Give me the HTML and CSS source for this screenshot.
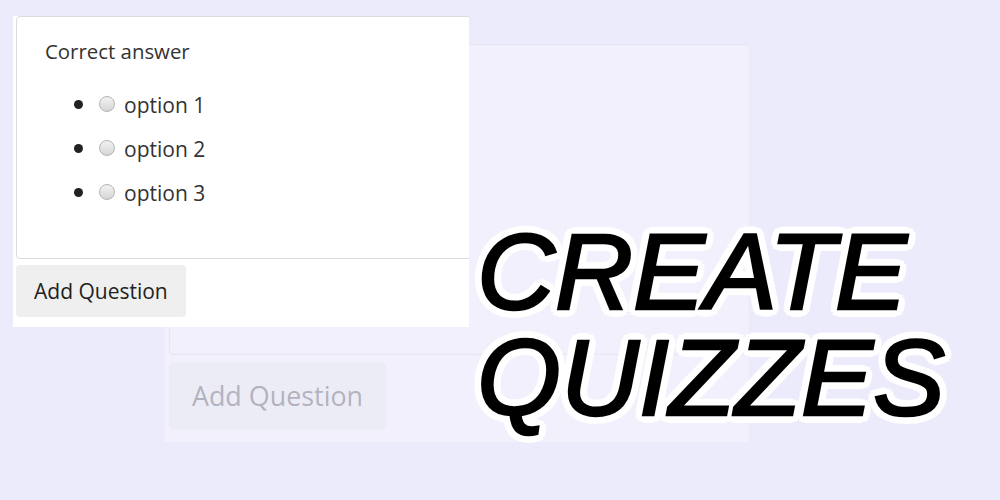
FILE: index.html
```html
<!DOCTYPE html>
<html lang="en">
<head>
<meta charset="utf-8">
<title>Create Quizzes</title>
<link rel="stylesheet" href="styles.css">
</head>
<body>
<div class="stage">
  <div class="panel panel--ghost" aria-hidden="true">
    <div class="card">
      <p class="label">Correct answer</p>
      <ul class="options">
        <li><input type="radio" class="radio" tabindex="-1"><span>option 1</span></li>
        <li><input type="radio" class="radio" tabindex="-1"><span>option 2</span></li>
        <li><input type="radio" class="radio" tabindex="-1"><span>option 3</span></li>
      </ul>
    </div>
    <button class="btn" tabindex="-1">Add Question</button>
  </div>

  <div class="panel panel--front">
    <div class="card">
      <p class="label">Correct answer</p>
      <ul class="options">
        <li><input type="radio" name="ans" class="radio"><span>option 1</span></li>
        <li><input type="radio" name="ans" class="radio"><span>option 2</span></li>
        <li><input type="radio" name="ans" class="radio"><span>option 3</span></li>
      </ul>
    </div>
    <button class="btn">Add Question</button>
  </div>

  <h1 class="title"><span class="title__line">CREATE</span><span class="title__line">QUIZZES</span></h1>
</div>
</body>
</html>
```
FILE: styles.css
```css
html, body {
  margin: 0;
  padding: 0;
}

body {
  background: #ecebfb;
  font-family: "Open Sans", "Noto Sans", sans-serif;
  color: #333;
  width: 1000px;
  height: 500px;
  overflow: hidden;
}

.stage {
  position: relative;
  width: 1000px;
  height: 500px;
  padding: 16px 0 0 13px;
  box-sizing: border-box;
}

.panel {
  width: 456px;
  height: 311px;
  box-sizing: border-box;
  background: #fff;
  padding: 0 0 0 3px;
  overflow: hidden;
}

.panel--front {
  position: relative;
  z-index: 2;
}

.panel--ghost {
  position: absolute;
  left: 165px;
  top: 44px;
  transform: scale(1.28);
  transform-origin: 0 0;
  opacity: 0.28;
  z-index: 1;
}

.card {
  width: 470px;
  height: 243px;
  box-sizing: border-box;
  border: 1px solid #dcdcdc;
  border-radius: 4px;
  padding: 20px 0 0 28px;
}

.label {
  margin: 0;
  font-size: 20.4px;
  line-height: 28px;
  color: #333;
}

.options {
  margin: 16px 0 0;
  padding: 0 0 0 54px;
  list-style: disc;
}

.options li {
  display: list-item;
  height: 44px;
  font-size: 21px;
  line-height: 44px;
  color: #333;
}

.options li::marker {
  font-size: 26px;
  color: #222;
}

.radio {
  appearance: none;
  -webkit-appearance: none;
  width: 16px;
  height: 16px;
  margin: 0 9px 0 0;
  border: 1px solid #b4b4b4;
  border-radius: 50%;
  background: linear-gradient(#f2f2f2, #d6d6d6);
  box-sizing: border-box;
  vertical-align: -1px;
  position: relative;
  top: -2px;
}

.btn {
  display: block;
  margin-top: 6px;
  height: 52px;
  padding: 0 18px;
  border: none;
  border-radius: 4px;
  background: #efefef;
  font-family: inherit;
  font-size: 21px;
  color: #222;
}

.title {
  position: absolute;
  left: 477px;
  top: 219px;
  margin: 0;
  z-index: 3;
  font-family: "Liberation Sans", Arial, sans-serif;
  font-style: italic;
  font-weight: normal;
  font-size: 108px;
  line-height: 106px;
  color: #000;
  -webkit-text-stroke: 2.5px #000;
  text-shadow:
    8px 0 1px #fff, -8px 0 1px #fff, 0 8px 1px #fff, 0 -8px 1px #fff,
    5.7px 5.7px 1px #fff, -5.7px 5.7px 1px #fff, 5.7px -5.7px 1px #fff, -5.7px -5.7px 1px #fff,
    7.4px 3.1px 1px #fff, -7.4px 3.1px 1px #fff, 7.4px -3.1px 1px #fff, -7.4px -3.1px 1px #fff,
    3.1px 7.4px 1px #fff, -3.1px 7.4px 1px #fff, 3.1px -7.4px 1px #fff, -3.1px -7.4px 1px #fff;
}

.title__line {
  display: block;
  height: 106px;
}
```
